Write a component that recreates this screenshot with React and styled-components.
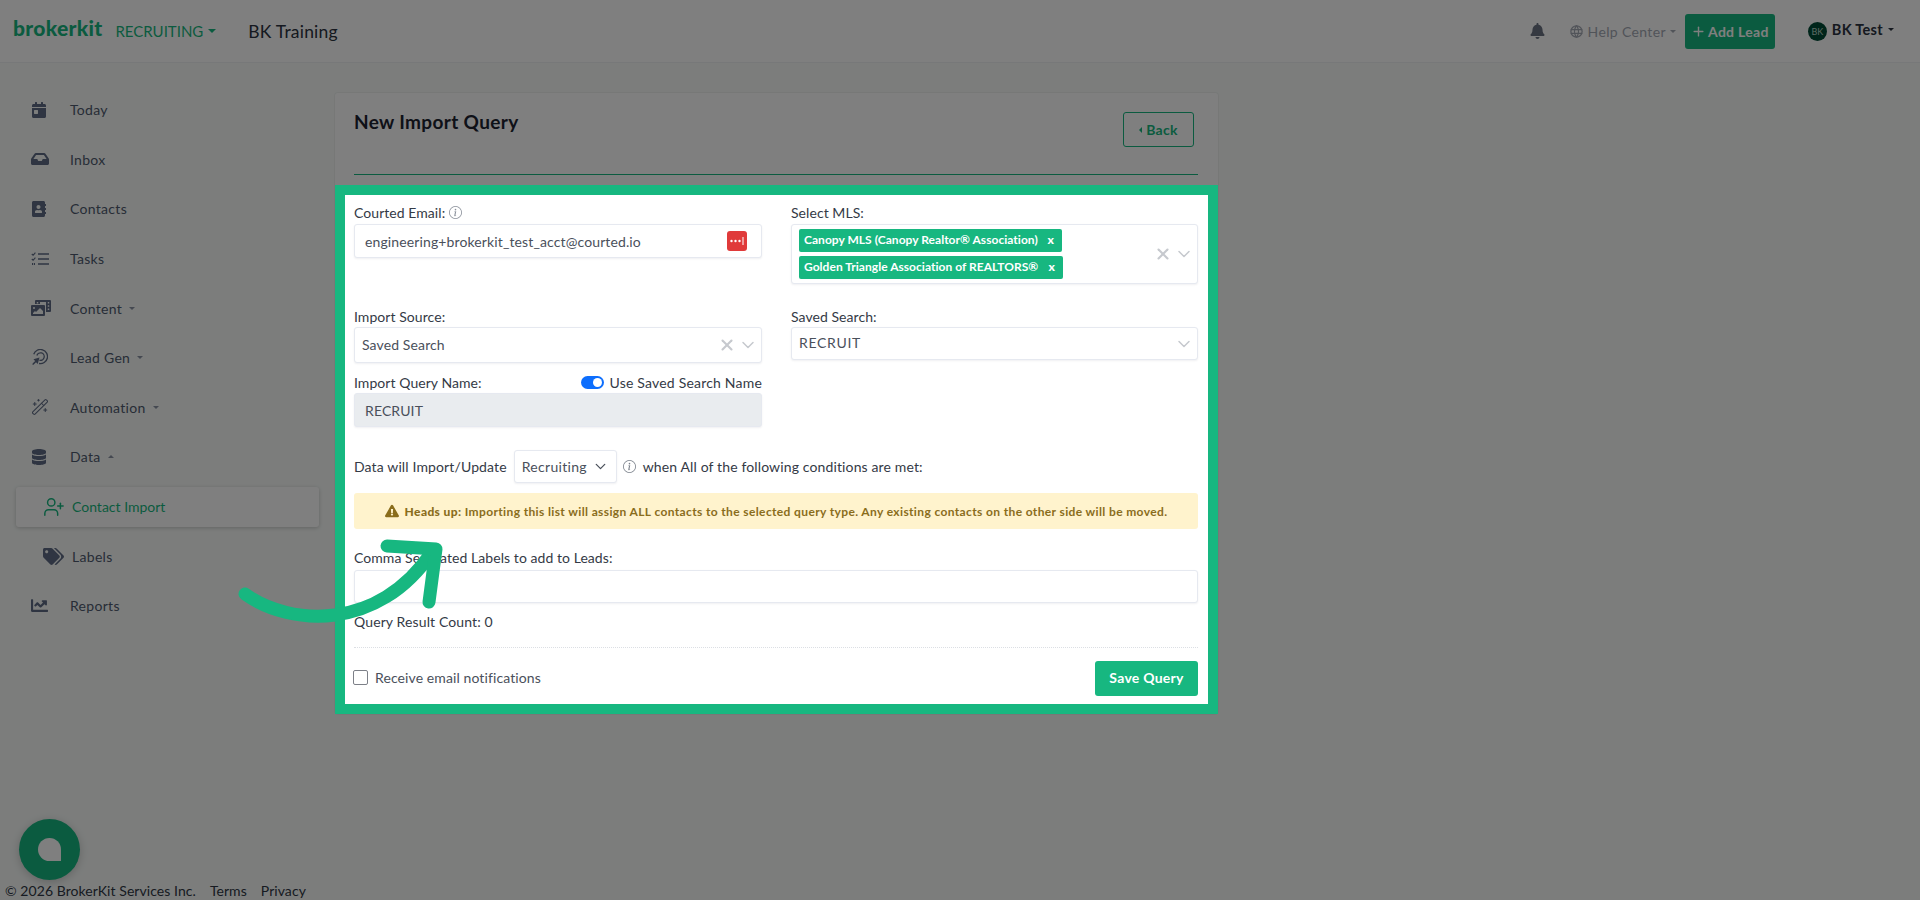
import React from "react";
import styled, { createGlobalStyle } from "styled-components";
import { FaBell, FaCalendarDay, FaInbox, FaAddressBook, FaPhotoVideo, FaDatabase, FaTags, FaChartLine, FaExclamationTriangle } from "react-icons/fa";
import { TbWorld } from "react-icons/tb";
import { BsInfoCircle } from "react-icons/bs";
import { ChevronDown, X, Plus, UserPlus, WandSparkles } from "lucide-react";

const green = "#17b780";
const font = `"Lato", "Noto Sans", sans-serif`;

const Global = createGlobalStyle`
  html, body { margin: 0; padding: 0; height: 900px; overflow: hidden; background: #f8fbf9; }
  body { font-family: ${font}; color: #2b3240; font-size: 14px; }
  * { box-sizing: border-box; }
`;

const Page = styled.div`
  position: relative;
  width: 1920px;
  height: 900px;
  display: flex;
  flex-direction: column;
  overflow: hidden;
`;

const Header = styled.header`
  height: 63px;
  flex: none;
  background: #fff;
  border-bottom: 1px solid #eef0f2;
  display: flex;
  align-items: center;
  padding: 0 26px 0 13px;
`;
const Logo = styled.span`
  font-size: 21px;
  font-weight: 900;
  color: ${green};
  letter-spacing: 0.3px;
  margin-top: -7px;
`;
const Product = styled.span`
  display: flex;
  align-items: center;
  gap: 5px;
  margin-left: 13px;
  font-size: 15px;
  color: ${green};
`;
const Caret = styled.i`
  display: inline-block;
  width: 0;
  height: 0;
  border-left: ${(p) => p.$size || 3.5}px solid transparent;
  border-right: ${(p) => p.$size || 3.5}px solid transparent;
  border-top: ${(p) => (p.$up ? 0 : `${p.$size || 3.5}px solid currentColor`)};
  border-bottom: ${(p) => (p.$up ? `${p.$size || 3.5}px solid currentColor` : 0)};
`;
const Account = styled.span`
  margin-left: 32px;
  margin-top: 1px;
  font-size: 17.5px;
  letter-spacing: 0.2px;
  color: #2b3240;
`;
const HeaderRight = styled.div`
  margin-left: auto;
  display: flex;
  align-items: center;
`;
const Bell = styled(FaBell)`
  width: 15px;
  height: 16px;
  color: #6b7382;
  margin-right: 24px;
`;
const Help = styled.span`
  display: flex;
  align-items: center;
  color: #a3a8b3;
  font-size: 14px;
  gap: 4px;
  letter-spacing: 0.35px;
  margin-right: 9px;
  svg { width: 15px; height: 15px; }
`;
const AddLead = styled.button`
  width: 90px;
  height: 35px;
  margin-right: 33px;
  border: 0;
  border-radius: 3px;
  background: ${green};
  color: #fff;
  font: 700 14px ${font};
  letter-spacing: 0.3px;
  display: flex;
  align-items: center;
  justify-content: center;
  gap: 2px;
  padding: 0;
  svg { width: 15px; height: 15px; }
`;
const Avatar = styled.span`
  width: 19px;
  height: 19px;
  border-radius: 50%;
  background: #014a35;
  color: #b9d6cb;
  font-size: 9px;
  display: flex;
  align-items: center;
  justify-content: center;
  margin-right: 5px;
`;
const UserName = styled.span`
  display: flex;
  align-items: center;
  gap: 5px;
  font-weight: 700;
  font-size: 14.5px;
  letter-spacing: 0.3px;
  color: #2b3240;
  margin-top: -3px;
`;

const Body = styled.div`
  flex: 1;
  display: flex;
  min-height: 0;
`;
const Sidebar = styled.nav`
  width: 335px;
  flex: none;
  padding: 22px 16px 0;
`;
const NavRow = styled.div`
  height: 49.6px;
  display: flex;
  align-items: center;
`;
const NavLink = styled.a`
  display: flex;
  align-items: center;
  width: 303px;
  height: 40px;
  padding-left: ${(p) => (p.$sub ? 27 : 15)}px;
  color: ${(p) => (p.$active ? green : "#4f5a6e")};
  font-size: 14px;
  letter-spacing: ${(p) => (p.$active ? 0 : 0.3)}px;
  background: ${(p) => (p.$active ? "#fff" : "transparent")};
  border-radius: 3px;
  box-shadow: ${(p) => (p.$active ? "0 1px 4px rgba(0,0,0,.2)" : "none")};
`;
const NavIcon = styled.span`
  width: ${(p) => (p.$sub ? 29 : 39)}px;
  flex: none;
  display: flex;
  align-items: center;
  color: ${(p) => (p.$active ? green : "#5f6b85")};
  svg { width: ${(p) => p.$w || 16}px; height: ${(p) => p.$w || 16}px; }
`;
const NavCaret = styled(Caret)`
  margin-left: 7px;
  color: #8a93a3;
`;

const Main = styled.main`
  flex: 1;
  padding-top: 30px;
`;
const Card = styled.section`
  width: 883px;
  background: #fff;
  border-radius: 3px;
  box-shadow: 0 0 0 1px rgba(0,0,0,.04);
`;
const CardHead = styled.div`
  height: 82px;
  margin: 0 20px 10px 19px;
  border-bottom: 1.5px solid ${green};
  display: flex;
  justify-content: space-between;
`;
const Title = styled.h1`
  margin: 17px 0 0;
  font-size: 19px;
  line-height: 24px;
  font-weight: 700;
  letter-spacing: 0.35px;
  color: #1c2330;
`;
const BackButton = styled.button`
  width: 71px;
  height: 35px;
  margin: 19px 4px 0 0;
  border: 1px solid ${green};
  border-radius: 3px;
  background: transparent;
  color: ${green};
  font: 700 14px ${font};
  letter-spacing: 0.3px;
  display: flex;
  align-items: center;
  justify-content: center;
  gap: 4px;
`;
const BackCaret = styled.i`
  width: 0;
  height: 0;
  border-top: 3.5px solid transparent;
  border-bottom: 3.5px solid transparent;
  border-right: 3.5px solid currentColor;
`;

const Spotlight = styled.form`
  position: relative;
  z-index: 5;
  display: block;
  width: 883px;
  height: 529px;
  border: 10px solid ${green};
  background: #fff;
  padding: 8px 10px 0 9px;
  box-shadow: 0 0 0 2400px rgba(0, 0, 0, 0.5);
`;
const FormGrid = styled.div`
  display: grid;
  grid-template-columns: 408px 407px;
  column-gap: 29px;
  margin-bottom: ${(p) => p.$after || 0}px;
  align-items: start;
`;
const Field = styled.div`
  min-width: 0;
  margin-top: ${(p) => p.$top || 0}px;
`;
const Label = styled.label`
  display: flex;
  align-items: center;
  height: 20px;
  padding-bottom: 2px;
  gap: 4px;
  font-size: 14px;
  letter-spacing: 0.06px;
  color: #343a46;
  svg { color: #8a909a; }
`;
const RowLabel = styled(Label)`
  padding-bottom: 0;
`;
const ToggleLabel = styled(RowLabel)`
  letter-spacing: 0.2px;
`;
const LabelRow = styled.div`
  display: flex;
  justify-content: space-between;
  align-items: center;
  height: 21px;
`;
const Toggle = styled.span`
  position: relative;
  width: 23px;
  height: 13px;
  border-radius: 7px;
  background: #0d6efd;
  margin-right: 2px;
  &::after {
    content: "";
    position: absolute;
    right: 2px;
    top: 2px;
    width: 9px;
    height: 9px;
    border-radius: 50%;
    background: #fff;
  }
`;
const Box = styled.div`
  display: flex;
  align-items: center;
  height: ${(p) => p.$h || 34}px;
  padding: ${(p) => (p.$pad != null ? p.$pad : "0 10px")};
  margin-top: ${(p) => p.$top || 0}px;
  border: 1px solid #e6e9f0;
  border-radius: 3px;
  background: ${(p) => (p.$muted ? "#e9ecef" : "#fff")};
  box-shadow: 0 1px 2px rgba(60, 70, 90, 0.08);
  font-size: 14px;
  letter-spacing: 0.12px;
  color: #4a505b;
  white-space: nowrap;
`;
const BoxText = styled.span`
  flex: 1;
  padding-bottom: ${(p) => (p.$lift ? 2 : 0)}px;
  letter-spacing: ${(p) => (p.$wide ? 0.7 : 0.12)}px;
`;
const PasswordIcon = styled.span`
  width: 20px;
  height: 20px;
  border-radius: 3px;
  background: #e03a3a;
  display: flex;
  align-items: center;
  justify-content: center;
  margin-right: 4px;
`;
const Indicators = styled.span`
  display: flex;
  align-items: center;
  gap: 2px;
  color: #c6c9ce;
  margin-left: auto;
  margin-right: -4px;
`;
const Tags = styled.div`
  flex: 1;
  display: flex;
  flex-direction: column;
  gap: 4px;
  align-items: flex-start;
`;
const Tag = styled.span`
  display: flex;
  align-items: center;
  justify-content: space-between;
  width: ${(p) => p.$w}px;
  height: 23px;
  padding: 0 8px 2px 5px;
  border-radius: 2px;
  background: ${green};
  color: #fff;
  font-size: 12px;
  font-weight: 700;
  letter-spacing: 0.03px;
`;
const TagClose = styled.b`
  font-size: 12px;
  font-weight: 900;
`;
const ConditionRow = styled.div`
  display: flex;
  align-items: center;
  height: 33px;
  margin-top: 23px;
  font-size: 14px;
  letter-spacing: 0.13px;
  color: #343a46;
`;
const TypeSelect = styled(Box)`
  width: 103px;
  height: 33px;
  margin: 0 6px 0 7px;
  padding: 0 7px;
  justify-content: space-between;
  letter-spacing: 0.3px;
`;
const ConditionInfo = styled(BsInfoCircle)`
  width: 13px;
  height: 13px;
  color: #7a808a;
  margin-right: 7px;
`;
const Alert = styled.div`
  height: 36px;
  margin-top: 10px;
  border-radius: 3px;
  background: #fff3cd;
  color: #8a6d1c;
  display: flex;
  align-items: center;
  justify-content: center;
  gap: 6px;
  font-size: 12px;
  font-weight: 700;
  letter-spacing: 0.37px;
  b { font-weight: 900; }
  svg { width: 14px; height: 14px; }
`;
const Count = styled.div`
  margin-top: 9px;
  height: 20px;
  line-height: 20px;
  font-size: 14px;
  letter-spacing: 0.12px;
  color: #343a46;
`;
const Divider = styled.hr`
  margin: 15px 0 0;
  border: 0;
  border-top: 1px dotted #dcdfe4;
`;
const FormFooter = styled.div`
  display: flex;
  align-items: center;
  justify-content: space-between;
  margin-top: 13px;
`;
const CheckLabel = styled.label`
  display: flex;
  align-items: center;
  gap: 7px;
  margin: -2px 0 0 -1px;
  font-size: 14px;
  letter-spacing: 0.1px;
  color: #4a505b;
`;
const CheckBox = styled.span`
  width: 15px;
  height: 15px;
  border: 1px solid #7d8088;
  border-radius: 2px;
  background: #fff;
`;
const SaveButton = styled.button`
  width: 103px;
  height: 35px;
  border: 0;
  border-radius: 3px;
  padding: 0 0 2px;
  background: ${green};
  color: #fff;
  font: 700 14px ${font};
  letter-spacing: 0.25px;
`;
const ArrowOverlay = styled.svg`
  position: absolute;
  left: 0;
  top: 0;
  z-index: 10;
  pointer-events: none;
`;
const ChatBubble = styled.button`
  position: absolute;
  left: 19px;
  bottom: 20px;
  width: 61px;
  height: 61px;
  border: 0;
  border-radius: 50%;
  background: ${green};
  padding: 0;
  display: flex;
  align-items: center;
  justify-content: center;
  box-shadow: 0 2px 10px rgba(0,0,0,.2);
  &::after {
    content: "";
    width: 23px;
    height: 23px;
    background: #fff;
    border-radius: 50% 50% 0 50%;
  }
`;
const Footer = styled.footer`
  position: absolute;
  left: 5px;
  bottom: 0;
  height: 20px;
  display: flex;
  align-items: center;
  gap: 14px;
  font-size: 14px;
  letter-spacing: 0.06px;
  color: #2f3644;
`;

const Chevron = () => <ChevronDown size={20} strokeWidth={1.8} />;
const Clear = () => <X size={18} strokeWidth={2.8} />;

const TasksIcon = () => (
  <svg viewBox="0 0 18 16" fill="none" stroke="currentColor">
    <path d="M7 3h11M7 8h11M7 13h11" strokeWidth="1.7" />
    <path d="M.8 3l1.3 1.3L4.4 1.6M.8 8l1.3 1.3L4.4 6.6" strokeWidth="1.1" />
    <path d="M1 13h3" strokeWidth="2" strokeDasharray="1.2 .8" />
  </svg>
);
const LeadGenIcon = () => (
  <svg viewBox="0 0 18 18" fill="none" stroke="currentColor" strokeWidth="1.4">
    <path d="M2.9 5.5A7.5 7.5 0 1 1 8.5 15.35" />
    <path d="M6.2 6.8A4 4 0 1 1 9 11.9" />
    <path d="M1.5 16.8l1.2-.1 2.6-2.6 1.8 1.9L9 9 2.6 10.8l1.8 1.8-2.7 2.8z" fill="currentColor" stroke="none" />
  </svg>
);

const NAV = [
  { label: "Today", icon: <FaCalendarDay /> },
  { label: "Inbox", icon: <FaInbox />, w: 18 },
  { label: "Contacts", icon: <FaAddressBook /> },
  { label: "Tasks", icon: <TasksIcon />, w: 18 },
  { label: "Content", icon: <FaPhotoVideo />, caret: "down", w: 20 },
  { label: "Lead Gen", icon: <LeadGenIcon />, caret: "down", w: 17 },
  { label: "Automation", icon: <WandSparkles strokeWidth={1.4} />, caret: "down", w: 18 },
  { label: "Data", icon: <FaDatabase />, caret: "up" },
  { label: "Contact Import", icon: <UserPlus strokeWidth={1.6} />, sub: true, active: true, w: 22 },
  { label: "Labels", icon: <FaTags />, sub: true, w: 21 },
  { label: "Reports", icon: <FaChartLine />, w: 17 },
];

export default function App() {
  return (
    <Page>
      <Global />
      <Header>
        <Logo>brokerkit</Logo>
        <Product>RECRUITING <Caret $size={4} /></Product>
        <Account>BK Training</Account>
        <HeaderRight>
          <Bell />
          <Help><TbWorld />Help Center <Caret /></Help>
          <AddLead type="button"><Plus strokeWidth={2.2} />Add Lead</AddLead>
          <Avatar>BK</Avatar>
          <UserName>BK Test <Caret /></UserName>
        </HeaderRight>
      </Header>
      <Body>
        <Sidebar>
          {NAV.map((n) => (
            <NavRow key={n.label}>
              <NavLink $sub={n.sub} $active={n.active}>
                <NavIcon $sub={n.sub} $active={n.active} $w={n.w}>{n.icon}</NavIcon>
                {n.label}
                {n.caret && <NavCaret $up={n.caret === "up"} />}
              </NavLink>
            </NavRow>
          ))}
        </Sidebar>
        <Main>
          <Card>
            <CardHead>
              <Title>New Import Query</Title>
              <BackButton type="button"><BackCaret />Back</BackButton>
            </CardHead>
            <Spotlight>
              <FormGrid $after={23}>
                <Field>
                  <Label>Courted Email: <BsInfoCircle size={13} /></Label>
                  <Box $top={1}>
                    <BoxText>engineering+brokerkit_test_acct@courted.io</BoxText>
                    <PasswordIcon>
                      <svg width="16" height="8" viewBox="0 0 16 8">
                        <circle cx="2.5" cy="4" r="1.2" fill="#fff" />
                        <circle cx="6.5" cy="4" r="1.2" fill="#fff" />
                        <circle cx="10.5" cy="4" r="1.2" fill="#fff" />
                        <rect x="13.5" y="0" width="1" height="8" fill="#fff" />
                      </svg>
                    </PasswordIcon>
                  </Box>
                </Field>
                <Field>
                  <Label>Select MLS:</Label>
                  <Box $top={1} $h={60} $pad="0 7px">
                    <Tags>
                      <Tag $w={263}>Canopy MLS (Canopy Realtor® Association)<TagClose>x</TagClose></Tag>
                      <Tag $w={264}>Golden Triangle Association of REALTORS®<TagClose>x</TagClose></Tag>
                    </Tags>
                    <Indicators><Clear /><Chevron /></Indicators>
                  </Box>
                </Field>
              </FormGrid>
              <FormGrid $after={9}>
                <Field>
                  <Label>Import Source:</Label>
                  <Box $h={36} $pad="0 7px">
                    <BoxText $lift>Saved Search</BoxText>
                    <Indicators><Clear /><Chevron /></Indicators>
                  </Box>
                </Field>
                <Field>
                  <Label>Saved Search:</Label>
                  <Box $h={33} $pad="0 7px">
                    <BoxText $lift $wide>RECRUIT</BoxText>
                    <Indicators><Chevron /></Indicators>
                  </Box>
                </Field>
              </FormGrid>
              <FormGrid>
                <Field>
                  <LabelRow>
                    <RowLabel>Import Query Name:</RowLabel>
                    <ToggleLabel><Toggle />Use Saved Search Name</ToggleLabel>
                  </LabelRow>
                  <Box $muted>RECRUIT</Box>
                </Field>
              </FormGrid>
              <ConditionRow>
                Data will Import/Update
                <TypeSelect>Recruiting <ChevronDown size={17} strokeWidth={1.8} /></TypeSelect>
                <ConditionInfo />
                when All of the following conditions are met:
              </ConditionRow>
              <Alert>
                <FaExclamationTriangle />
                <span><b>Heads up:</b> Importing this list will assign ALL contacts to the selected query type. Any existing contacts on the other side will be moved.</span>
              </Alert>
              <Field $top={19}>
                <Label>Comma Separated Labels to add to Leads:</Label>
                <Box $top={2} $h={33} />
              </Field>
              <Count>Query Result Count: 0</Count>
              <Divider />
              <FormFooter>
                <CheckLabel><CheckBox />Receive email notifications</CheckLabel>
                <SaveButton type="button">Save Query</SaveButton>
              </FormFooter>
            </Spotlight>
          </Card>
        </Main>
      </Body>
      <ChatBubble type="button" aria-label="Chat" />
      <Footer>
        <span>© 2026 BrokerKit Services Inc.</span>
        <span>Terms</span>
        <span>Privacy</span>
      </Footer>
      <ArrowOverlay width="1920" height="900" viewBox="0 0 1920 900" fill="none">
        <path d="M245 594 C290 626 378 632 432 552" stroke={green} strokeWidth="13" strokeLinecap="round" />
        <path d="M387 546 L436 549 L429 602" stroke={green} strokeWidth="13" strokeLinecap="round" strokeLinejoin="round" />
      </ArrowOverlay>
    </Page>
  );
}
